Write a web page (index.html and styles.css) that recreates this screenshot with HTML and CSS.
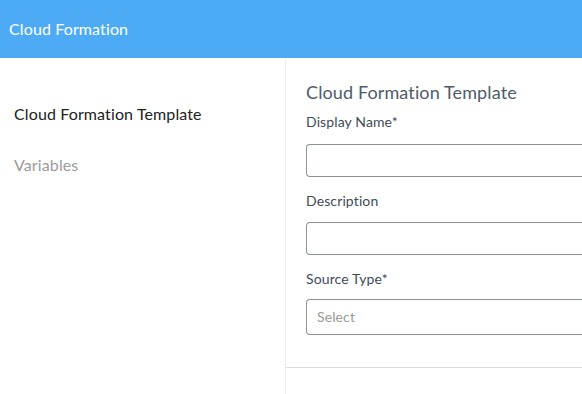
FILE: index.html
```html
<!DOCTYPE html>
<html lang="en">
<head>
    <meta charset="UTF-8">
    <meta name="viewport" content="width=device-width, initial-scale=1.0">
    <title>Cloud Formation</title>
    <link rel="stylesheet" href="styles.css">
</head>
<body>
    <div class="header">Cloud Formation</div>
    <div class="main">
        <div class="sidebar">
            <div class="nav-item active">Cloud Formation Template</div>
            <div class="nav-item">Variables</div>
        </div>
        <div class="content">
            <div class="form">
                <div class="form-title">Cloud Formation Template</div>
                <label class="label">Display Name*</label>
                <div class="input"></div>
                <label class="label">Description</label>
                <div class="input"></div>
                <label class="label">Source Type*</label>
                <div class="input select">Select</div>
            </div>
            <div class="footer"></div>
        </div>
    </div>
</body>
</html>
```

FILE: styles.css
```css
body{
    margin: 0;
    font-family: "Lato", "Open Sans", sans-serif;
    font-variant-ligatures: none;
    letter-spacing: 0.12px;
    background: #fff;
    overflow: hidden;
}
.header{
    height: 58px;
    background-color: #4dabf5;
    color: #fff;
    font-size: 16px;
    line-height: 58px;
    padding-left: 9px;
}
.main{
    display: flex;
    height: 336px;
}
.sidebar{
    width: 286px;
    flex-shrink: 0;
    border-right: 1px solid #eceef0;
    padding-top: 44px;
    box-sizing: border-box;
}
.nav-item{
    padding-left: 14px;
    font-size: 16px;
    color: #9b9b9b;
    height: 51px;
    line-height: 24px;
}
.nav-item.active{
    color: #222;
}
.content{
    flex: 1;
    display: flex;
    flex-direction: column;
}
.form{
    padding: 22px 0 0 20px;
    height: 309px;
    box-sizing: border-box;
}
.form-title{
    font-size: 18px;
    color: #4f5b69;
    line-height: 24px;
}
.label{
    display: block;
    font-size: 14px;
    color: #3f4b58;
    line-height: 20px;
    margin-top: 14px;
}
.form-title + .label{
    margin-top: 8px;
}
.input{
    margin-top: 11px;
    height: 31px;
    border: 1px solid #8e939a;
    border-right: none;
    border-radius: 4px 0 0 4px;
    font-size: 14px;
    color: #9a9a9a;
    line-height: 31px;
    padding-left: 10px;
}
.form-title + .label + .input{
    margin-top: 12px;
}
.input.select{
    margin-top: 10px;
    height: 34px;
    line-height: 34px;
}
.footer{
    border-top: 1px solid #dcdcdc;
    flex: 1;
}
```
